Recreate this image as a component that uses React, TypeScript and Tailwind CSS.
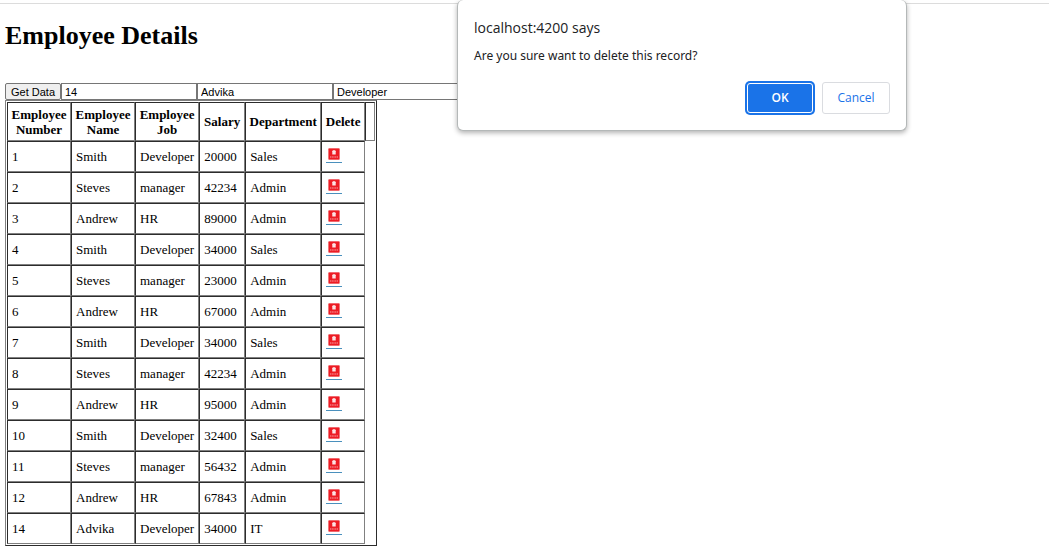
const employees: [number, string, string, number, string][] = [
  [1, 'Smith', 'Developer', 20000, 'Sales'],
  [2, 'Steves', 'manager', 42234, 'Admin'],
  [3, 'Andrew', 'HR', 89000, 'Admin'],
  [4, 'Smith', 'Developer', 34000, 'Sales'],
  [5, 'Steves', 'manager', 23000, 'Admin'],
  [6, 'Andrew', 'HR', 67000, 'Admin'],
  [7, 'Smith', 'Developer', 34000, 'Sales'],
  [8, 'Steves', 'manager', 42234, 'Admin'],
  [9, 'Andrew', 'HR', 95000, 'Admin'],
  [10, 'Smith', 'Developer', 32400, 'Sales'],
  [11, 'Steves', 'manager', 56432, 'Admin'],
  [12, 'Andrew', 'HR', 67843, 'Admin'],
  [14, 'Advika', 'Developer', 34000, 'IT'],
];

const columns = [
  { label: 'Employee Number', width: 'w-16' },
  { label: 'Employee Name', width: 'w-16' },
  { label: 'Employee Job', width: 'w-16' },
  { label: 'Salary', width: 'w-[46px]' },
  { label: 'Department', width: 'w-[76px]' },
  { label: 'Delete', width: 'w-11' },
];

const fields = [
  { label: 'Employee number', value: '14' },
  { label: 'Employee name', value: 'Advika' },
  { label: 'Employee job', value: 'Developer' },
];

const cellBorder = 'border border-t-[#2c2c2c] border-l-[#2c2c2c] border-b-[#808080] border-r-[#808080]';

function DeleteIcon() {
  return (
    <svg width="16" height="16" viewBox="0 0 16 16" aria-hidden="true">
      <rect x="2" y="0" width="12" height="12" rx="1" fill="#f7b5b8" />
      <rect x="2.6" y="0.6" width="10.8" height="10.8" rx="0.6" fill="#ed1c24" />
      <path d="M7.3 2h1.4v.8h1.3v.8h-.3v3H6.3v-3H6v-.8h1.3z" fill="#fff" opacity="0.88" />
      <path d="M4 9h8" stroke="#fff" strokeWidth="1" strokeDasharray="1.2 0.5" opacity="0.6" />
      <rect x="0" y="14" width="16" height="1" fill="#4a90bd" />
    </svg>
  );
}

function ConfirmDialog() {
  return (
    <div
      role="dialog"
      aria-labelledby="confirm-title"
      aria-describedby="confirm-message"
      className="absolute top-0 right-[142px] w-[450px] rounded-md border border-t-0 border-[#b4b8b8] bg-white px-4 pt-[18px] pb-4 font-['Open_Sans','Noto_Sans',sans-serif] shadow-[0_2px_5px_rgba(0,0,0,0.3)]"
    >
      <h2 id="confirm-title" className="text-[14px] leading-5 text-[#202124]">localhost:4200 says</h2>
      <p id="confirm-message" className="mt-2 font-['Noto_Sans',sans-serif] text-[12px] leading-5 text-[#202124]">
        Are you sure want to delete this record?
      </p>
      <div className="mt-4 flex items-center justify-end gap-[9px]">
        <button
          type="button"
          className="h-[30px] w-[66px] rounded-[3px] border border-white bg-[#1a73e8] text-[12px] font-semibold text-white shadow-[0_0_0_2px_#1a73e8]"
        >
          OK
        </button>
        <button
          type="button"
          className="h-8 w-[68px] rounded-[3px] border border-[#dadce0] bg-white text-[12px] font-medium text-[#1a73e8]"
        >
          Cancel
        </button>
      </div>
    </div>
  );
}

export default function App() {
  return (
    <div className="relative min-h-screen bg-white pt-[3px] text-black">
      <main className="border-t border-[#dcdcdc] px-[5px] pt-4 pb-1 font-['Liberation_Serif',serif]">
        <h1 className="text-[26px] leading-8 font-bold">Employee Details</h1>
        <form className="mt-[31px] flex font-['Liberation_Sans',sans-serif] text-[11px]">
          <button type="button" className="h-[17px] w-14 rounded-xs border border-[#767676] bg-[#efefef] leading-3">
            Get Data
          </button>
          {fields.map((field) => (
            <input
              key={field.label}
              aria-label={field.label}
              defaultValue={field.value}
              className="h-[17px] w-[136px] border border-[#767676] bg-white px-[3px]"
            />
          ))}
        </form>
        <table className="border-separate border-spacing-0 border border-t-[#808080] border-r-[#2c2c2c] border-b-[#2c2c2c] border-l-[#808080] p-px text-[13px] leading-[15px]">
          <thead>
            <tr className="h-[39px]">
              {columns.map((column) => (
                <th key={column.label} scope="col" className={`${cellBorder} ${column.width}`}>
                  {column.label}
                </th>
              ))}
              <td className={`${cellBorder} w-[10px]`} />
            </tr>
          </thead>
          <tbody>
            {employees.map((employee) => (
              <tr key={employee[0]} className="h-[31px]">
                {employee.map((value, index) => (
                  <td key={index} className={`${cellBorder} px-1 pb-px`}>
                    {value}
                  </td>
                ))}
                <td className={`${cellBorder} px-1 pb-px`}>
                  <button type="button" aria-label={`Delete employee ${employee[0]}`} className="block">
                    <DeleteIcon />
                  </button>
                </td>
              </tr>
            ))}
          </tbody>
        </table>
      </main>
      <ConfirmDialog />
    </div>
  );
}
